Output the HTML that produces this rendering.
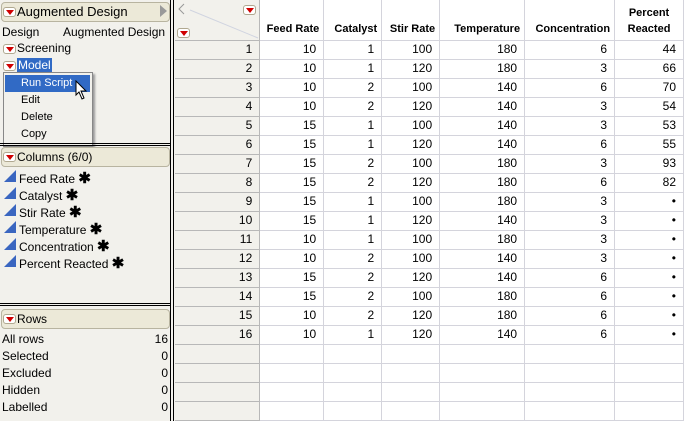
<!DOCTYPE html>
<html><head><meta charset="utf-8"><style>
*{margin:0;padding:0;box-sizing:border-box}
body{width:684px;height:421px;overflow:hidden;background:#f2f1ec;font-family:"Liberation Sans",sans-serif;font-size:12px;color:#000;position:relative}
.a{position:absolute;white-space:nowrap}
.hdr{position:absolute;left:1px;width:169px;background:#ece9d8;border:1px solid #b8b4a0;border-radius:4px}
.btn{position:absolute;width:13px;height:10px;background:#fff;border:1px solid #b0a890;border-radius:3px}
.btn:after{content:"";position:absolute;left:2px;top:2px;border-left:4px solid transparent;border-right:4px solid transparent;border-top:5px solid #d00000}
.ic{position:absolute;left:4px;width:0;height:0;border-left:12px solid transparent;border-bottom:12px solid #3a66c0}
.st{font-weight:bold;font-size:15px}
table{position:absolute;left:175px;top:0;border-collapse:collapse;table-layout:fixed}
td{height:19px;border:1px solid #d4d4dc;text-align:right;padding-right:7px;background:#fff;line-height:17px;overflow:hidden;white-space:nowrap}
td.r{background:#f2f1ec;border-color:#b8b8b8;border-left:none}
tr.h td{height:40px;font-weight:bold;font-size:11px;vertical-align:bottom;padding-bottom:3px;padding-right:4px;line-height:16px;border-top:none}
tr.h td.r{border-right:1px solid #b8b8b8}
</style></head><body>
<div class="hdr" style="top:2px;height:20px"></div>
<div class="btn" style="left:3px;top:7px"></div>
<div class="a" style="left:17px;top:4px;font-size:13px">Augmented Design</div>
<div class="a" style="left:160px;top:5px;border-top:6px solid transparent;border-bottom:6px solid transparent;border-left:7px solid #999"></div>
<div class="a" style="left:2px;top:25px">Design</div>
<div class="a" style="left:63px;top:25px">Augmented Design</div>
<div class="btn" style="left:3px;top:44px"></div>
<div class="a" style="left:17px;top:41px">Screening</div>
<div class="btn" style="left:3px;top:61px"></div>
<div class="a" style="left:17px;top:58px;background:#316ac5;color:#fff;padding:0 1px">Model</div>
<div class="a" style="left:3px;top:72px;width:90px;height:75px;background:#f2f1ec;border:1px solid #888;box-shadow:2px 2px 2px #999"></div>
<div class="a" style="left:5px;top:75px;width:85px;height:17px;background:#316ac5"></div>
<div class="a" style="left:21px;top:77px;color:#fff;font-size:11px">Run Script</div>
<div class="a" style="left:21px;top:94px;font-size:11px">Edit</div>
<div class="a" style="left:21px;top:111px;font-size:11px">Delete</div>
<div class="a" style="left:21px;top:128px;font-size:11px">Copy</div>
<svg class="a" style="left:75px;top:80px" width="14" height="20"><path d="M1 1 L1 15 L4 12 L7 19 L9 18 L6 11 L11 11 Z" fill="#fff" stroke="#000"/></svg>
<div class="a" style="left:0;top:143px;width:171px;height:3px;border-top:1px solid #000;border-bottom:1px solid #000"></div>
<div class="hdr" style="top:147px;height:20px"></div>
<div class="btn" style="left:3px;top:152px"></div>
<div class="a" style="left:17px;top:150px">Columns (6/0)</div>
<div class="ic" style="top:170px"></div><div class="a" style="left:19px;top:169px">Feed Rate <span class="st">✱</span></div>
<div class="ic" style="top:187px"></div><div class="a" style="left:19px;top:186px">Catalyst <span class="st">✱</span></div>
<div class="ic" style="top:204px"></div><div class="a" style="left:19px;top:203px">Stir Rate <span class="st">✱</span></div>
<div class="ic" style="top:221px"></div><div class="a" style="left:19px;top:220px">Temperature <span class="st">✱</span></div>
<div class="ic" style="top:238px"></div><div class="a" style="left:19px;top:237px">Concentration <span class="st">✱</span></div>
<div class="ic" style="top:255px"></div><div class="a" style="left:19px;top:254px">Percent Reacted <span class="st">✱</span></div>
<div class="a" style="left:0;top:303px;width:171px;height:3px;border-top:1px solid #000;border-bottom:1px solid #000"></div>
<div class="hdr" style="top:309px;height:20px"></div>
<div class="btn" style="left:3px;top:314px"></div>
<div class="a" style="left:17px;top:312px">Rows</div>
<div class="a" style="left:2px;top:332px">All rows</div><div class="a" style="left:150px;top:332px;width:18px;text-align:right">16</div>
<div class="a" style="left:2px;top:349px">Selected</div><div class="a" style="left:150px;top:349px;width:18px;text-align:right">0</div>
<div class="a" style="left:2px;top:366px">Excluded</div><div class="a" style="left:150px;top:366px;width:18px;text-align:right">0</div>
<div class="a" style="left:2px;top:383px">Hidden</div><div class="a" style="left:150px;top:383px;width:18px;text-align:right">0</div>
<div class="a" style="left:2px;top:400px">Labelled</div><div class="a" style="left:150px;top:400px;width:18px;text-align:right">0</div>
<div class="a" style="left:170px;top:0;width:4px;height:421px;border-left:1px solid #000;border-right:1px solid #000"></div>
<table>
<colgroup><col style="width:85px"><col style="width:64px"><col style="width:58px"><col style="width:58px"><col style="width:85px"><col style="width:90px"><col style="width:69px"></colgroup>
<tr class="h"><td class="r"></td><td>Feed Rate</td><td>Catalyst</td><td>Stir Rate</td><td>Temperature</td><td>Concentration</td><td style="text-align:center;padding-right:0">Percent<br>Reacted</td></tr>
<tr><td class="r">1</td><td>10</td><td>1</td><td>100</td><td>180</td><td>6</td><td>44</td></tr>
<tr><td class="r">2</td><td>10</td><td>1</td><td>120</td><td>180</td><td>3</td><td>66</td></tr>
<tr><td class="r">3</td><td>10</td><td>2</td><td>100</td><td>140</td><td>6</td><td>70</td></tr>
<tr><td class="r">4</td><td>10</td><td>2</td><td>120</td><td>140</td><td>3</td><td>54</td></tr>
<tr><td class="r">5</td><td>15</td><td>1</td><td>100</td><td>140</td><td>3</td><td>53</td></tr>
<tr><td class="r">6</td><td>15</td><td>1</td><td>120</td><td>140</td><td>6</td><td>55</td></tr>
<tr><td class="r">7</td><td>15</td><td>2</td><td>100</td><td>180</td><td>3</td><td>93</td></tr>
<tr><td class="r">8</td><td>15</td><td>2</td><td>120</td><td>180</td><td>6</td><td>82</td></tr>
<tr><td class="r">9</td><td>15</td><td>1</td><td>100</td><td>180</td><td>3</td><td>•</td></tr>
<tr><td class="r">10</td><td>15</td><td>1</td><td>120</td><td>140</td><td>3</td><td>•</td></tr>
<tr><td class="r">11</td><td>10</td><td>1</td><td>100</td><td>180</td><td>3</td><td>•</td></tr>
<tr><td class="r">12</td><td>10</td><td>2</td><td>100</td><td>140</td><td>3</td><td>•</td></tr>
<tr><td class="r">13</td><td>15</td><td>2</td><td>120</td><td>140</td><td>6</td><td>•</td></tr>
<tr><td class="r">14</td><td>15</td><td>2</td><td>100</td><td>180</td><td>6</td><td>•</td></tr>
<tr><td class="r">15</td><td>10</td><td>2</td><td>120</td><td>180</td><td>6</td><td>•</td></tr>
<tr><td class="r">16</td><td>10</td><td>1</td><td>120</td><td>140</td><td>6</td><td>•</td></tr>
<tr><td class="r"></td><td></td><td></td><td></td><td></td><td></td><td></td></tr>
<tr><td class="r"></td><td></td><td></td><td></td><td></td><td></td><td></td></tr>
<tr><td class="r"></td><td></td><td></td><td></td><td></td><td></td><td></td></tr>
<tr><td class="r"></td><td></td><td></td><td></td><td></td><td></td><td></td></tr>
</table>
<svg class="a" style="left:176px;top:2px" width="84" height="38"><path d="M8 2 L3 7 L8 12" fill="none" stroke="#999"/><path d="M14 8 L82 36" stroke="#d0d4e0"/></svg>
<div class="btn" style="left:243px;top:5px"></div>
<div class="btn" style="left:177px;top:28px"></div>
</body></html>
